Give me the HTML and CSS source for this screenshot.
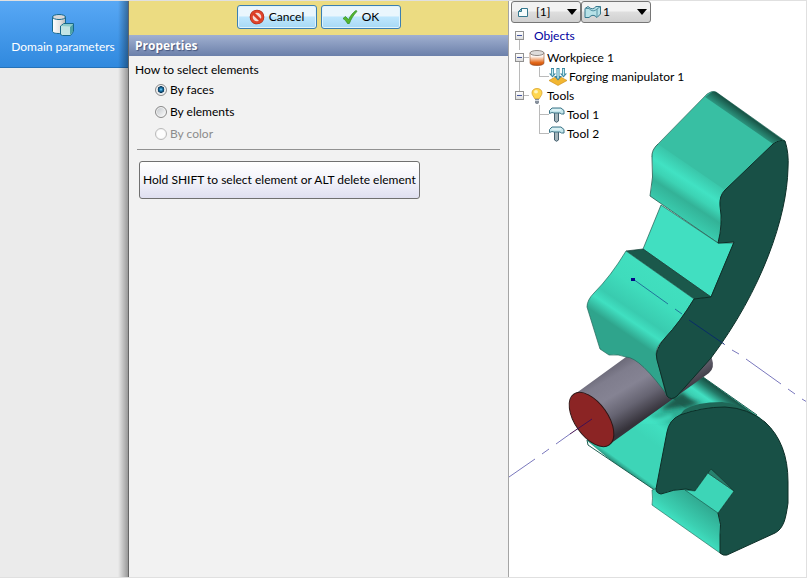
FILE: index.html
```html
<!DOCTYPE html>
<html lang="en">
<head>
<meta charset="utf-8">
<title>Domain parameters</title>
<link rel="stylesheet" href="styles.css">
</head>
<body>
<div class="app">
  <nav class="sidebar">
    <a class="step" href="#domain">
      <svg class="step-icon" viewBox="0 0 24 24" aria-hidden="true">
        <defs>
          <linearGradient id="can"><stop offset="0" stop-color="#fff"/><stop offset=".6" stop-color="#e2e2e2"/><stop offset="1" stop-color="#b5b5b5"/></linearGradient>
        </defs>
        <path d="M1.500 4v14c0 2 3 2.500 7 2.500s6-1 6-2.500V4z" fill="url(#can)" stroke="#17688c"/>
        <ellipse cx="8" cy="4" rx="6.500" ry="2.500" fill="#d8d8d8" stroke="#17688c"/>
        <path d="M9.500 13l3.500-2.500h9.500v8l-3 4h-8l-2-1z" fill="#c2e4e4" stroke="#17688c"/>
        <path d="M10 13l3-2h9l-3 2.500z" fill="#8ccaca"/>
        <path d="M19 14l3-3v7.500l-3 3.500z" fill="#4ca3a8"/>
      </svg>
      <span>Domain parameters</span>
    </a>
  </nav>

  <main class="panel">
    <div class="actions">
      <button class="action" type="button">
        <svg class="action-icon" viewBox="0 0 16 16" aria-hidden="true">
          <circle cx="8" cy="8" r="5.500" fill="none" stroke="#a92a17" stroke-width="3.600"/>
          <circle cx="8" cy="8" r="5.500" fill="#f3dcd8" stroke="#e0452b" stroke-width="2.400"/>
          <path d="M4.200 4.200l7.600 7.600" stroke="#d93c24" stroke-width="3"/>
        </svg>
        Cancel
      </button>
      <button class="action" type="button">
        <svg class="action-icon" viewBox="0 0 16 16" aria-hidden="true">
          <path d="M1 9.500l2.500-2 3 3.200C8.500 6.500 11 3.500 14 1.500l1 .8C11.500 6 9 10 7.300 14.500H5.500C4.500 12.500 3 10.800 1 9.500z" fill="#55b72f" stroke="#348f24" stroke-width=".8"/>
        </svg>
        OK
      </button>
    </div>
    <h1 class="title">Properties</h1>
    <form class="properties">
      <fieldset class="choices">
        <legend>How to select elements</legend>
        <label class="choice"><input type="radio" name="mode" checked>By faces</label>
        <label class="choice"><input type="radio" name="mode">By elements</label>
        <label class="choice choice-off"><input type="radio" name="mode" disabled>By color</label>
      </fieldset>
      <hr class="rule">
      <button class="hint" type="button">Hold SHIFT to select element or ALT delete element</button>
    </form>
  </main>

  <section class="viewport">
    <svg class="scene" viewBox="509 1 297 576" preserveAspectRatio="xMinYMin meet" role="img" aria-label="Forging model">
      <defs>
        <linearGradient id="steel" gradientUnits="userSpaceOnUse" x1="620" y1="362" x2="651" y2="414">
          <stop offset="0" stop-color="#6d6b7a"/><stop offset=".15" stop-color="#7f7d8d"/><stop offset=".42" stop-color="#858393"/><stop offset=".7" stop-color="#666472"/><stop offset="1" stop-color="#35323a"/>
        </linearGradient>
        <linearGradient id="crown" gradientUnits="userSpaceOnUse" x1="753" y1="117" x2="743" y2="131">
          <stop offset="0" stop-color="#15483c"/><stop offset="1" stop-color="#38bfa3"/>
        </linearGradient>
        <linearGradient id="upperSide" gradientUnits="userSpaceOnUse" x1="698" y1="167" x2="668" y2="213">
          <stop offset="0" stop-color="#38bfa3"/><stop offset=".32" stop-color="#41e2c3"/><stop offset=".48" stop-color="#3cd3b4"/><stop offset=".64" stop-color="#33b297"/><stop offset="1" stop-color="#3bd0b2"/>
        </linearGradient>
        <linearGradient id="jaw" gradientUnits="userSpaceOnUse" x1="660" y1="275" x2="622" y2="331">
          <stop offset="0" stop-color="#41dfbf"/><stop offset=".35" stop-color="#3fdcbc"/><stop offset=".66" stop-color="#39cbaf"/><stop offset=".8" stop-color="#40e0c1"/><stop offset="1" stop-color="#2fa48c"/>
        </linearGradient>
        <linearGradient id="lowerBody" gradientUnits="userSpaceOnUse" x1="674" y1="398" x2="622" y2="470">
          <stop offset="0" stop-color="#2fb399"/><stop offset=".22" stop-color="#35c5a8"/><stop offset=".36" stop-color="#40dfc0"/><stop offset=".55" stop-color="#3dd5b7"/><stop offset=".93" stop-color="#3dd5b7"/><stop offset="1" stop-color="#227a68"/>
        </linearGradient>
        <linearGradient id="lowerTop" gradientUnits="userSpaceOnUse" x1="727" y1="393" x2="703" y2="427">
          <stop offset="0" stop-color="#17483d"/><stop offset=".16" stop-color="#237967"/><stop offset=".38" stop-color="#41dfc1"/><stop offset=".62" stop-color="#39c6aa"/><stop offset=".85" stop-color="#1c5f50"/>
        </linearGradient>
        <linearGradient id="lowerSide" gradientUnits="userSpaceOnUse" x1="704" y1="500" x2="680" y2="532">
          <stop offset="0" stop-color="#2fa68e"/><stop offset=".65" stop-color="#3bcfb1"/><stop offset=".88" stop-color="#41e2c3"/><stop offset="1" stop-color="#2a927d"/>
        </linearGradient>
        <filter id="soft" x="-20%" y="-40%" width="140%" height="180%"><feGaussianBlur stdDeviation="2"/></filter>
        <clipPath id="lowerClip"><path d="M587 440L703 377L762 419L725 408Q690 409 677 420Q669 427 667 438L656 491L588 445z"/></clipPath>
      </defs>

      <g clip-path="url(#lowerClip)">
        <path d="M580 435L700 370L770 425L656 498z" fill="url(#lowerBody)"/>
        <path d="M672 398L703 377L766 423L690 412z" fill="url(#lowerTop)"/>
        <path d="M664 412Q682 404 700 405L722 407Q690 408 671 422Q655 420 650 416z" fill="#2fae94" filter="url(#soft)"/>
        <path d="M662 408L682 392Q690 401 702 403Q682 408 662 410z" fill="#1b5b4d" filter="url(#soft)"/>
        <path d="M684 410Q696 402 722 402Q738 403 756 416L725 408Q700 406 680 415z" fill="#1f6757"/>
        <path d="M640 420Q656 424 672 416" fill="none" stroke="#43e4c5" stroke-width="4" filter="url(#soft)"/>
      </g>
      <path d="M587 440L588 445L656 491M703 377L757 415" fill="none" stroke="#1d5f51"/>

      <path d="M575 394L626 357L706 340L712 359Q715 368 709 373L610 444z" fill="url(#steel)"/>
      <ellipse cx="591.500" cy="419.500" rx="31" ry="16.500" transform="rotate(55 591.500 419.500)" fill="#8b2424" stroke="#2d1515"/>

      <path d="M652 490Q653 499 652 505L720 553Q724 530 718 513L690 484L661 487z" fill="url(#lowerSide)" stroke="#1f5f51" stroke-width=".6"/>
      <path d="M656 489L667 432Q669 420 680 415Q702 407 725 407Q748 408 765 422Q788 443 788 482V503Q786 517 784 522Q781 530 775 533L727 555Q723 556 720 553V535Q722 525 718 513L734 491L711 469L695 491L686 489Q674 489 661 494Q656 493 656 489z" fill="#185046" stroke="#0c2e27"/>
      <path d="M708 473L734 491L718 513L685 490L695 491z" fill="#3dd5b7" stroke="#174d41" stroke-width=".6"/>
      <path d="M711 469L734 491L708 473z" fill="#26806d" stroke="#123c33" stroke-width=".6"/>

      <path d="M658 144L707 94Q712 90 716 92L785 141L725 190Q719 195 720 202L652 157Q653 149 658 144z" fill="#38bfa3" stroke="#32584f" stroke-width=".6"/>
      <path d="M712 92Q714 91 716 92L783 140Q777 140 773 144L705 97z" fill="url(#crown)"/>
      <path d="M658 144L725 190Q720 195 720 202Q723 225 718 243L650 196Q654 177 652 158Q652 150 658 144z" fill="url(#upperSide)"/>
      <path d="M658 144Q651 150 652 158Q654 177 650 196L718 243" fill="none" stroke="#235d50" stroke-width=".8"/>
      <path d="M661 205L718 243H734L711 297L643 249z" fill="#41dfc1" stroke="#21584d" stroke-width=".7"/>
      <path d="M626 251L643 249L711 297L694 299z" fill="#1b584b" stroke="#123c33" stroke-width=".7"/>
      <path d="M626 251L694 299Q680 322 665 338Q656 346 656 354L666 395L670 399Q640 357 626 357Q619 354 609 355L600 349L587 307Q587 300 594 293Q611 276 626 251z" fill="url(#jaw)" stroke="#24675a" stroke-width=".7"/>
      <path d="M785 141Q789 153 788 168C787 217 762 290 711 358L677 396Q671 401 667 396L657 360Q654 350 665 338Q680 322 694 299L711 297L734 242L718 243Q723 224 720 206Q719 196 725 190L773 144Q780 139 785 141z" fill="#185046" stroke="#0c2e27"/>

      <g class="axis">
        <path d="M509 477L535 459M542 454L549 449M556 444L570 434M724 344L725 345M732 350L739 354M746 359L781 384M788 389L795 394M802 399L807 402" stroke="#7a78bd"/>
        <path d="M570 434L592 419" stroke="#421052"/>
        <path d="M633 279L668 304M675 309L682 314" stroke="#20749b"/>
        <path d="M689 320L724 344" stroke="#082c68"/>
        <path d="M631 278h4v3h-4z" fill="#050587"/>
      </g>
    </svg>

    <div class="overlay">
      <div class="pickers">
        <div class="picker">
          <svg class="picker-icon" viewBox="0 0 18 14" aria-hidden="true"><path d="M7.500 3.500h6v8h-9v-5z" fill="#f6fcfc" stroke="#36788e"/><path d="M4.500 6.500l3-3v3z" fill="#7ac0d0" stroke="#36788e"/></svg>
          <select class="wide" aria-label="Sheet"><option>[1]</option></select>
          <svg class="arrow" viewBox="0 0 10 6" aria-hidden="true"><path d="M0 0h10L5 6z"/></svg>
        </div>
        <div class="picker">
          <svg class="picker-icon" viewBox="0 0 18 14" aria-hidden="true"><path d="M1 3.500L4 1.500Q8.500 6 12 1.500H16.500V9L13 12.500Q9 8 5 12.500H1z" fill="#b7e1e7" stroke="#36788e"/><path d="M1 3.500H5Q9 8 13 4L16.500 1.500M13 4v8" fill="none" stroke="#5694a5"/></svg>
          <select class="narrow" aria-label="View"><option>1</option></select>
          <svg class="arrow" viewBox="0 0 10 6" aria-hidden="true"><path d="M0 0h10L5 6z"/></svg>
        </div>
      </div>

      <ul class="tree">
        <li class="branch root">
          <div class="row"><button class="toggle" type="button" aria-label="Collapse Objects"></button><span class="root-name">Objects</span></div>
        </li>
        <li class="branch">
          <div class="row"><button class="toggle" type="button" aria-label="Collapse Workpiece 1"></button><span class="link"></span>
            <svg class="icon" viewBox="0 0 16 16" aria-hidden="true">
              <defs>
                <linearGradient id="hot" x1="0" y1="0" x2="0" y2="1"><stop offset=".25" stop-color="#fdfaf8"/><stop offset=".5" stop-color="#f2b48c"/><stop offset=".75" stop-color="#e46a1c"/><stop offset="1" stop-color="#c24a05"/></linearGradient>
              </defs>
              <path d="M1 3v10c0 3.500 14 3.500 14 0V3z" fill="url(#hot)" stroke="#93542f" stroke-width=".6"/>
              <ellipse cx="8" cy="3" rx="7" ry="2.500" fill="#dedcdb" stroke="#77706c" stroke-width=".8"/>
            </svg>
            <span>Workpiece 1</span></div>
          <ul class="twigs">
            <li class="row twig"><span class="link"></span>
              <svg class="icon-wide" viewBox="0 0 18 18" aria-hidden="true">
                <path d="M0 12.500l9-5 9 5-9 5z" fill="#f2b631" stroke="#c98913" stroke-width=".6"/>
                <path d="M3.500 0v6M9 0v9M14.500 0v6" stroke="#3c87a0" stroke-width="3"/>
                <path d="M0 5.500h7L3.500 9.500zM5 8h8l-4 4.500zM11 5.500h7l-3.500 4z" fill="#3c87a0"/>
                <path d="M3.500 1v6.500M9 1v9.500M14.500 1v6.500" stroke="#c4edf2" stroke-width="1.400"/>
              </svg>
              <span>Forging manipulator 1</span></li>
          </ul>
        </li>
        <li class="branch last">
          <div class="row"><button class="toggle" type="button" aria-label="Collapse Tools"></button><span class="link"></span>
            <svg class="icon" viewBox="0 0 16 16" aria-hidden="true">
              <path d="M5.500 10.500C5 8.500 3 7.500 3 4.800 3 2 5.300.5 8 .5s5 1.500 5 4.300c0 2.700-2 3.700-2.500 5.700z" fill="#ffd650" stroke="#daa32b" stroke-width=".8"/>
              <ellipse cx="7" cy="3.800" rx="2" ry="1.800" fill="#fff4bd"/><path d="M6 11h4v3.500L9 16H7l-1-1.500z" fill="#87909c"/><path d="M6 12.500h4" stroke="#d5dae0"/>
            </svg>
            <span>Tools</span></div>
          <ul class="twigs">
            <li class="row twig"><span class="link"></span>
              <svg class="icon" viewBox="0 0 16 16" aria-hidden="true"><path d="M5.500 5.500h4v8.500q-2 2.500-4 0z" fill="#a3b4ba" stroke="#47616f"/><path d="M.5 3.500L3 1h9L15 3.500V7H12.500L11 6H5L3 5.500.5 6.500z" fill="#c6e7ec" stroke="#3c7487"/><path d="M3 3h9" stroke="#f2fcfd"/></svg>
              <span>Tool 1</span></li>
            <li class="row twig"><span class="link"></span>
              <svg class="icon" viewBox="0 0 16 16" aria-hidden="true"><path d="M5.500 5.500h4v8.500q-2 2.500-4 0z" fill="#a3b4ba" stroke="#47616f"/><path d="M.5 3.500L3 1h9L15 3.500V7H12.500L11 6H5L3 5.500.5 6.500z" fill="#c6e7ec" stroke="#3c7487"/><path d="M3 3h9" stroke="#f2fcfd"/></svg>
              <span>Tool 2</span></li>
          </ul>
        </li>
      </ul>
    </div>
  </section>
</div>
</body>
</html>
```
FILE: styles.css
```css
* { box-sizing: border-box; }

body {
  margin: 0;
  font: 12px/18px Lato, "Open Sans", sans-serif;
  color: #000;
}

button, select { font: inherit; color: inherit; }
ul { list-style: none; margin: 0; padding: 0; }
svg { display: block; flex: none; }

.app {
  display: grid;
  grid-template-columns: 129px 380px 1fr;
  min-height: 100vh;
  border: solid #e0e0e0;
  border-width: 1px 1px 1px 0;
}

/* Steps */
.sidebar {
  position: relative;
  background: #ebebeb;
  border-right: 1px solid #666;
}
.sidebar::after {
  content: "";
  position: absolute;
  inset: 0 0 0 auto;
  width: 10px;
  background: linear-gradient(to right, transparent, rgba(0, 0, 0, .35));
}
.step {
  display: flex;
  flex-direction: column;
  align-items: center;
  gap: 1px;
  height: 67px;
  padding: 12px 2px 0 0;
  border-bottom: 1px solid #2572b8;
  background: linear-gradient(#58a8f5, #3089de);
  color: #fff;
  text-decoration: none;
  white-space: nowrap;
}
.step-icon { width: 24px; height: 24px; }

/* Properties */
.panel { background: #f2f2f2; border-right: 1px solid #a5a5a5; }
.actions {
  display: flex;
  justify-content: center;
  gap: 4px;
  height: 34px;
  padding: 4px 0 6px;
  background: #ecdc82;
}
.action {
  display: flex;
  align-items: center;
  justify-content: center;
  gap: 4px;
  width: 80px;
  padding: 0;
  border: 1px solid #3c7fb1;
  border-radius: 3px;
  background: linear-gradient(#eaf6fd 45%, #bee6fd 50%, #a7d9f5);
  box-shadow: inset 0 0 0 1px #dff3fd;
}
.action-icon { width: 16px; height: 16px; }
.title {
  margin: 0;
  padding: 2px 6px 1px;
  background: linear-gradient(#a0b0d0, #6c80aa);
  color: #fff;
  font-family: "Open Sans", sans-serif;
  font-size: 12px;
  line-height: 18px;
  text-shadow: 1px 1px 1px #43547c;
}
.properties { padding: 5px 8px; }
.choices { margin: 0; padding: 0; border: 0; }
.choices legend { padding: 0; margin-left: -2px; }
.choice { display: flex; align-items: center; gap: 3px; height: 22px; padding-left: 18px; }
.choice-off { color: #8c8c8c; }
.choice input {
  appearance: none;
  width: 12px;
  height: 12px;
  margin: 0;
  border: 1px solid #8a8a8a;
  border-radius: 50%;
  background: linear-gradient(135deg, #bfc3c7, #fff);
  box-shadow: inset 0 0 0 1px #f4f4f4;
}
.choice input:checked {
  background: radial-gradient(circle at 50% 45%, #8fdcff 0, #1d7db4 18%, #0a3556 42%, #dfe3e6 48%);
}
.choice input:disabled { border-color: #b9b9b9; background: #fdfdfd; }
.rule { height: 1px; margin: 4px 0 11px; border: 0; background: #919191; }
.hint {
  display: block;
  height: 38px;
  margin-left: 2px;
  padding: 0 3px;
  border: 1px solid #707070;
  border-radius: 3px;
  background: linear-gradient(#fff, #f3f3fa 50%, #dfdff0);
  white-space: nowrap;
}

/* Model view */
.viewport { position: relative; background: #fff; }
.scene { position: absolute; inset: 0; width: 100%; height: 100%; }
.axis { fill: none; stroke-width: 1; }
.overlay { position: relative; padding: 0 2px; }
.pickers { display: flex; }
.picker { position: relative; }
.picker select {
  appearance: none;
  display: block;
  width: 70px;
  height: 22px;
  border: 1px solid #767676;
  border-radius: 3px;
  background: linear-gradient(#f2f2f2 45%, #dedede 50%, #d0d0d0);
}
.picker .wide { padding: 0 16px 0 24px; }
.picker .narrow { padding: 0 16px 0 21px; }
.picker-icon { position: absolute; top: 4px; left: 3px; width: 18px; height: 14px; pointer-events: none; }
.arrow { position: absolute; top: 8px; right: 4px; width: 10px; height: 6px; pointer-events: none; }

.tree { padding: 3px 0 0 4px; }
.branch { position: relative; }
.branch:not(.last)::before {
  content: "";
  position: absolute;
  top: 14px;
  bottom: -5px;
  left: 4px;
  width: 1px;
  background: #bababa;
}
.root { margin-bottom: 3px; }
.root-name { margin-left: 10px; color: #0000a0; }
.row { display: flex; align-items: center; height: 19px; white-space: nowrap; }
.toggle {
  position: relative;
  width: 9px;
  height: 9px;
  padding: 0;
  border: 1px solid #919191;
  background: linear-gradient(#4658a0, #4658a0) center / 5px 1px no-repeat, linear-gradient(#fff, #ddd);
}
.link { width: 5px; height: 1px; background: #bababa; }
.icon { width: 16px; height: 16px; margin-right: 2px; }
.icon-wide { width: 18px; height: 18px; margin-right: 2px; }
.twigs { padding-left: 24px; }
.twig { position: relative; }
.twig .link { width: 10px; }
.twig::before {
  content: "";
  position: absolute;
  top: -9px;
  left: 0;
  width: 1px;
  height: 19px;
  background: #bababa;
}
.twigs .twig:first-child::before { top: 0; height: 10px; }
```
